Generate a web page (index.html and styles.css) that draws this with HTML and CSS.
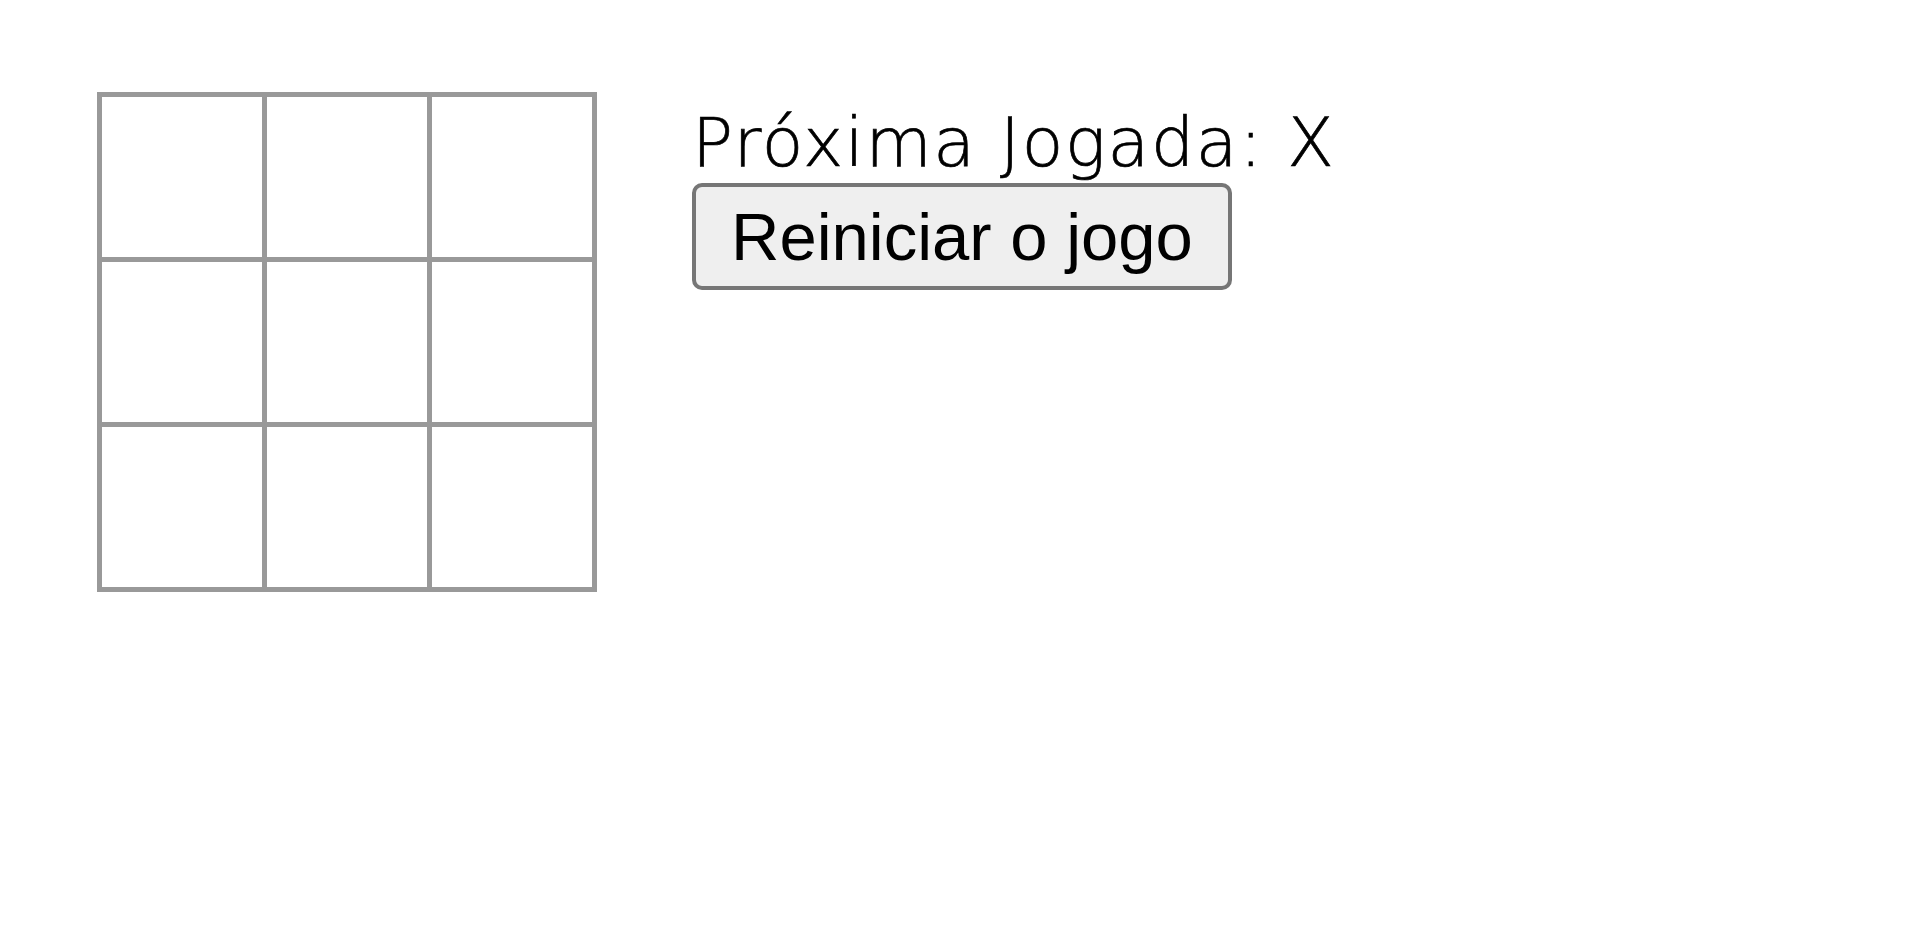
FILE: index.html
```html
<!DOCTYPE html>
<html lang="pt-BR">
<head>
<meta charset="utf-8">
<title>Jogo da Velha</title>
<link rel="stylesheet" href="styles.css">
</head>
<body>
<div class="game">
  <div class="board">
    <div class="square"></div>
    <div class="square"></div>
    <div class="square"></div>
    <div class="square"></div>
    <div class="square"></div>
    <div class="square"></div>
    <div class="square"></div>
    <div class="square"></div>
    <div class="square"></div>
  </div>
  <div class="info">
    <div class="status">Próxima Jogada: X</div>
    <button class="reset">Reiniciar o jogo</button>
  </div>
</div>
</body>
</html>
```

FILE: styles.css
```css
html, body {
  margin: 0;
  padding: 0;
  background: #ffffff;
}

.game {
  display: flex;
  flex-direction: row;
  align-items: flex-start;
  gap: 95px;
  padding: 92px 0 0 97px;
}

.board {
  display: grid;
  grid-template-columns: repeat(3, 160px);
  grid-template-rows: repeat(3, 160px);
  gap: 5px;
  padding: 5px;
  background: #999999;
}

.square {
  background: #ffffff;
}

.info {
  display: flex;
  flex-direction: column;
  align-items: flex-start;
  padding-top: 11px;
}

.status {
  font-family: "DejaVu Sans", sans-serif;
  font-weight: 200;
  font-size: 68px;
  line-height: 80px;
  letter-spacing: 1.7px;
  -webkit-text-stroke: 0.7px #000000;
  color: #000000;
  white-space: nowrap;
}

.reset {
  font-family: "Liberation Sans", Arial, sans-serif;
  font-size: 67px;
  line-height: 77px;
  color: #000000;
  background: #efefef;
  border: 4px solid #767676;
  border-radius: 10px;
  padding: 11px 35px;
  margin: 0;
}
```
